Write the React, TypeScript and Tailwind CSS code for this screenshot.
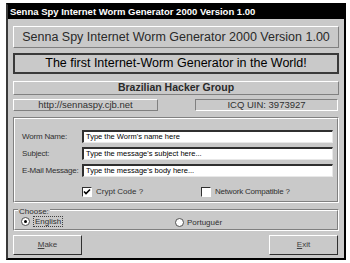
import React from "react";

const raised = "border border-t-white border-l-white border-b-[#808080] border-r-[#808080]";
const sunken = "border border-t-[#808080] border-l-[#808080] border-b-white border-r-white";
const BG = "bg-[#c9c9c9]";

function Input({ text }: { text: string }) {
  return (
    <div className="flex-1 h-[13px] bg-white border-t-2 border-l-2 border-t-[#303030] border-l-[#303030] border-b border-r border-b-[#e8e8e8] border-r-[#e8e8e8] flex items-center pl-[2px] text-[7.5px] leading-none text-black whitespace-nowrap overflow-hidden">
      {text}
    </div>
  );
}

function Row({ label, text }: { label: string; text: string }) {
  return (
    <div className="flex items-center gap-[4px] text-[8px] text-[#303030]">
      <div className="w-[56px] whitespace-nowrap tracking-[-0.2px]">{label}</div>
      <Input text={text} />
    </div>
  );
}

export default function App() {
  return (
    <div className="w-[350px] h-[263px] bg-white pt-[3px] pl-[6px]" style={{ fontFamily: '"Liberation Sans", Arial, sans-serif' }}>
      <div className={`w-[340px] h-[257px] ${BG} border-2 border-t-black border-l-[#3a3a3a] border-b-black border-r-black flex flex-col`}>
        <div className="h-[14px] bg-black text-white font-bold text-[9.5px] leading-[14px] pl-[2px] whitespace-nowrap">
          Senna Spy Internet Worm Generator 2000 Version 1.00
        </div>
        <div className="flex flex-col px-[5px]">
          <div className={`${raised} mt-[7px] h-[22px] flex items-center justify-center text-[12.5px] text-[#2a2a2a] whitespace-nowrap`}>
            Senna Spy Internet Worm Generator 2000 Version 1.00
          </div>
          <div className="mt-[5px] h-[21px] border-2 border-[#3a3a3a] flex items-center justify-center text-[12.5px] text-black whitespace-nowrap">
            The first Internet-Worm Generator in the World!
          </div>
          <div className={`${raised} mt-[7px] h-[14px] flex items-center justify-center text-[10.5px] font-bold text-[#2a2a2a] whitespace-nowrap`}>
            Brazilian Hacker Group
          </div>
          <div className="mt-[4px] flex justify-between pr-[1px]">
            <div className={`${raised} w-[145px] h-[12px] flex items-center justify-center text-[9.5px] text-[#303030] whitespace-nowrap`}>
              http://sennaspy.cjb.net
            </div>
            <div className={`${sunken} w-[143px] h-[12px] flex items-center justify-center text-[9.5px] text-[#303030] whitespace-nowrap`}>
              ICQ UIN: 3973927
            </div>
          </div>
          <div className={`mt-[6px] h-[86px] ${sunken}`}>
            <div className={`h-full ${raised} flex flex-col pl-[7px] pr-[4px] pt-[11px] gap-[4px]`}>
              <Row label="Worm Name:" text="Type the Worm's name here" />
              <Row label="Subject:" text="Type the message's subject here..." />
              <Row label="E-Mail Message:" text="Type the message's body here..." />
              <div className="flex items-center mt-[6px] h-[10px] text-[8px] text-[#303030] whitespace-nowrap">
                <div className="ml-[60px] flex items-center gap-[4px] w-[119px]">
                  <div className="w-[10px] h-[10px] bg-white border border-t-[#303030] border-l-[#303030] border-b-white border-r-white flex items-center justify-center">
                    <svg width="8" height="8" viewBox="0 0 8 8"><path d="M1 3.5 L3 5.6 L7 1.5" stroke="black" strokeWidth="1.6" fill="none" /></svg>
                  </div>
                  <span>Crypt Code ?</span>
                </div>
                <div className="flex items-center gap-[4px]">
                  <div className="w-[10px] h-[10px] bg-white border border-t-[#303030] border-l-[#303030] border-b-white border-r-white" />
                  <span className="tracking-[-0.2px]">Network Compatible ?</span>
                </div>
              </div>
            </div>
          </div>
          <div className={`mt-[6px] h-[22px] relative ${sunken}`}>
            <div className={`h-full ${raised} flex items-end pb-[2px] pl-[6px] text-[8px] text-[#303030] whitespace-nowrap`}>
              <div className="flex items-center gap-[3px] w-[154px]">
                <div className="w-[9px] h-[9px] rounded-full bg-white border border-[#505050] flex items-center justify-center">
                  <div className="w-[3px] h-[3px] rounded-full bg-black" />
                </div>
                <span className="border border-dotted border-[#404040] px-[1px] leading-[9px]">English</span>
              </div>
              <div className="flex items-center gap-[3px]">
                <div className="w-[9px] h-[9px] rounded-full bg-white border border-[#505050]" />
                <span className="leading-[9px]">Portuguêr</span>
              </div>
            </div>
            <div className={`absolute left-[4px] top-[-3px] ${BG} px-[1px] text-[8px] leading-[9px] text-[#303030]`}>Choose:</div>
          </div>
          <div className="mt-[4px] flex justify-between pr-[1px]">
            <div className="border border-t-white border-l-white border-b-[#303030] border-r-[#303030] w-[69px] h-[20px] flex items-center justify-center text-[8px] text-[#404040]">
              <span><span className="underline">M</span>ake</span>
            </div>
            <div className="border border-t-white border-l-white border-b-[#303030] border-r-[#303030] w-[69px] h-[20px] flex items-center justify-center text-[8px] text-[#404040]">
              <span><span className="underline">E</span>xit</span>
            </div>
          </div>
        </div>
      </div>
    </div>
  );
}
